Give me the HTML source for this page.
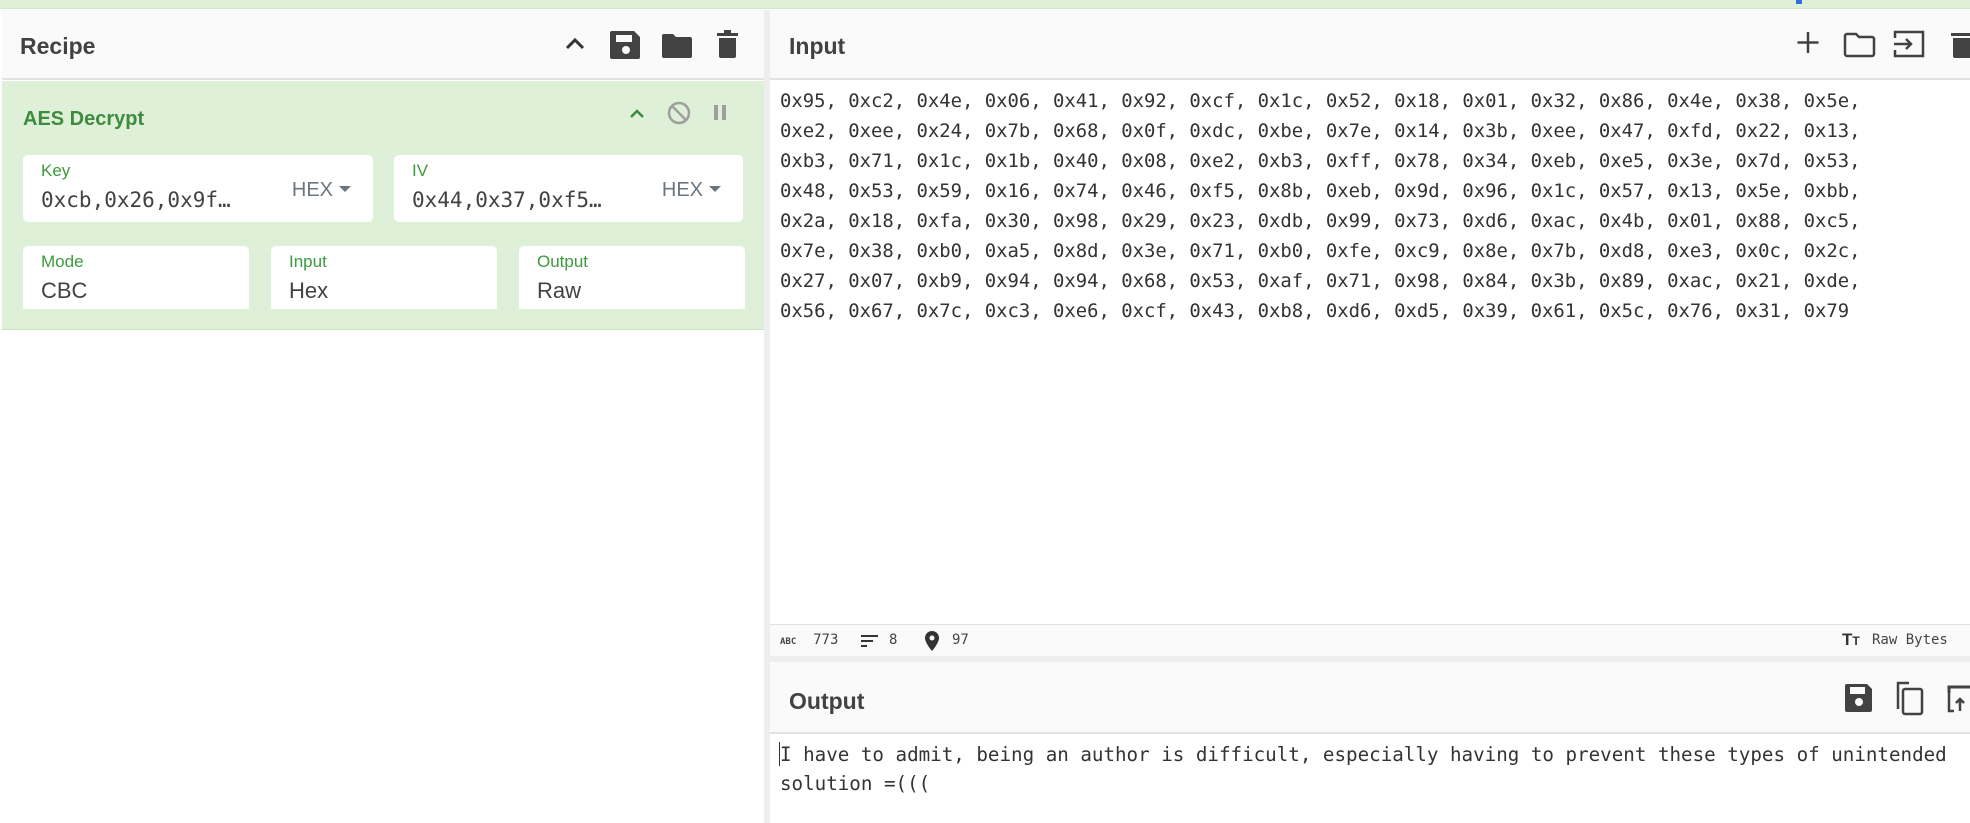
<!DOCTYPE html>
<html><head><meta charset="utf-8"><style>
*{box-sizing:border-box;margin:0;padding:0}
body{width:1970px;height:823px;overflow:hidden;background:#fff;font-family:"Liberation Sans","DejaVu Sans",sans-serif;position:relative}
.abs{position:absolute}
.top{left:0;top:0;width:1970px;height:9px;background:#dff0d8;border-bottom:1px solid #d4e6cc}
.hdr{background:#fafafa;border-bottom:2px solid #e3e3e3}
.title{font-size:23px;font-weight:bold;color:#424242}
.box{background:#fff;border-radius:5px}
.lbl{font-size:17px;color:#3d9a3d;position:absolute;left:18px;top:6px}
.val{font-size:22px;color:#424242;position:absolute;left:18px;top:32px}
.mono{font-family:"DejaVu Sans Mono","Liberation Mono",monospace}
.hex{position:absolute;right:22px;top:24px;font-size:20px;color:#6c757d}
.hex:after{content:"";display:inline-block;margin-left:6px;vertical-align:4px;border-left:6px solid transparent;border-right:6px solid transparent;border-top:6px solid #6c757d}
pre{font-family:"DejaVu Sans Mono","Liberation Mono",monospace;font-size:18.9px;line-height:30px;color:#333}
.st{font-family:"DejaVu Sans Mono",monospace;font-size:14px;color:#444}
</style></head><body>
<div class="abs top"></div>
<div class="abs" style="left:1796px;top:0;width:6px;height:4px;background:#2f6fe0"></div>

<div class="abs hdr" style="left:2px;top:10px;width:762px;height:70px"></div>
<div class="abs title" style="left:20px;top:33px">Recipe</div>
<svg class="abs" style="left:560px;top:28px" width="190" height="34" viewBox="0 0 190 34">
<path d="M7 20 L15 12 L23 20" fill="none" stroke="#333" stroke-width="3"/>
<path d="M52 3 h22 l6 6 v20 a2 2 0 0 1-2 2 h-26 a2 2 0 0 1-2-2 v-24 a2 2 0 0 1 2-2z" fill="#424242"/>
<rect x="56" y="7" width="16" height="7" fill="#fafafa"/><circle cx="66" cy="22" r="4" fill="#fafafa"/>
<path d="M102 6 h11 l3 3 h14 a2 2 0 0 1 2 2 v17 a2 2 0 0 1-2 2 h-26 a2 2 0 0 1-2-2 v-20 a2 2 0 0 1 2-2z" fill="#424242"/>
<rect x="157" y="5" width="21" height="3" fill="#424242"/><rect x="164" y="2" width="7" height="3" fill="#424242"/>
<path d="M159 10 h17 v18 a2 2 0 0 1-2 2 h-13 a2 2 0 0 1-2-2z" fill="#424242"/>
</svg>
<div class="abs" style="left:2px;top:81px;width:762px;height:249px;background:#dff0d8;border-bottom:1px solid #c9e2bf"></div>
<div class="abs" style="left:23px;top:108px;font-size:20px;font-weight:bold;color:#3d8b3d">AES Decrypt</div>
<svg class="abs" style="left:625px;top:100px" width="110" height="28" viewBox="0 0 110 28">
<path d="M6 17 L12 11 L18 17" fill="none" stroke="#3d8b3d" stroke-width="2.5"/>
<circle cx="54" cy="13" r="10" fill="none" stroke="#9e9e9e" stroke-width="2.5"/>
<path d="M47 6 L61 20" stroke="#9e9e9e" stroke-width="2.5"/>
<rect x="89" y="5" width="4" height="15" fill="#9e9e9e"/><rect x="97" y="5" width="4" height="15" fill="#9e9e9e"/>
</svg>
<div class="abs box" style="left:23px;top:155px;width:350px;height:67px"><div class="lbl">Key</div><div class="val mono" style="font-size:21px;top:33px">0xcb,0x26,0x9f…</div><div class="hex">HEX</div></div>
<div class="abs box" style="left:394px;top:155px;width:349px;height:67px"><div class="lbl">IV</div><div class="val mono" style="font-size:21px;top:33px">0x44,0x37,0xf5…</div><div class="hex">HEX</div></div>
<div class="abs box" style="left:23px;top:246px;width:226px;height:63px;border-radius:5px 5px 0 0"><div class="lbl">Mode</div><div class="val">CBC</div></div>
<div class="abs box" style="left:271px;top:246px;width:226px;height:63px;border-radius:5px 5px 0 0"><div class="lbl">Input</div><div class="val">Hex</div></div>
<div class="abs box" style="left:519px;top:246px;width:226px;height:63px;border-radius:5px 5px 0 0"><div class="lbl">Output</div><div class="val">Raw</div></div>

<div class="abs" style="left:764px;top:10px;width:6px;height:813px;background:#eeeeee"></div>

<div class="abs hdr" style="left:770px;top:10px;width:1200px;height:70px"></div>
<div class="abs title" style="left:789px;top:33px">Input</div>
<svg class="abs" style="left:1790px;top:28px" width="180" height="34" viewBox="0 0 180 34">
<path d="M18 4 v21 M7.5 14.5 h21" stroke="#424242" stroke-width="2.5"/>
<path d="M57 6 h9 l3 3 h13 a2 2 0 0 1 2 2 v15 a2 2 0 0 1-2 2 h-25 a2 2 0 0 1-2-2 v-18 a2 2 0 0 1 2-2z" fill="none" stroke="#424242" stroke-width="2.5"/>
<path d="M105 10 v-6 h28 v24 h-28 v-6" fill="none" stroke="#424242" stroke-width="2.5"/>
<path d="M104 16 h17 M116 11 l5 5 -5 5" fill="none" stroke="#424242" stroke-width="2.5"/>
<rect x="161" y="5" width="22" height="3" fill="#424242"/><path d="M163 10 h18 v18 a2 2 0 0 1-2 2 h-14 a2 2 0 0 1-2-2z" fill="#424242"/>
</svg>
<pre class="abs" style="left:780px;top:86px">0x95, 0xc2, 0x4e, 0x06, 0x41, 0x92, 0xcf, 0x1c, 0x52, 0x18, 0x01, 0x32, 0x86, 0x4e, 0x38, 0x5e,
0xe2, 0xee, 0x24, 0x7b, 0x68, 0x0f, 0xdc, 0xbe, 0x7e, 0x14, 0x3b, 0xee, 0x47, 0xfd, 0x22, 0x13,
0xb3, 0x71, 0x1c, 0x1b, 0x40, 0x08, 0xe2, 0xb3, 0xff, 0x78, 0x34, 0xeb, 0xe5, 0x3e, 0x7d, 0x53,
0x48, 0x53, 0x59, 0x16, 0x74, 0x46, 0xf5, 0x8b, 0xeb, 0x9d, 0x96, 0x1c, 0x57, 0x13, 0x5e, 0xbb,
0x2a, 0x18, 0xfa, 0x30, 0x98, 0x29, 0x23, 0xdb, 0x99, 0x73, 0xd6, 0xac, 0x4b, 0x01, 0x88, 0xc5,
0x7e, 0x38, 0xb0, 0xa5, 0x8d, 0x3e, 0x71, 0xb0, 0xfe, 0xc9, 0x8e, 0x7b, 0xd8, 0xe3, 0x0c, 0x2c,
0x27, 0x07, 0xb9, 0x94, 0x94, 0x68, 0x53, 0xaf, 0x71, 0x98, 0x84, 0x3b, 0x89, 0xac, 0x21, 0xde,
0x56, 0x67, 0x7c, 0xc3, 0xe6, 0xcf, 0x43, 0xb8, 0xd6, 0xd5, 0x39, 0x61, 0x5c, 0x76, 0x31, 0x79</pre>

<div class="abs" style="left:770px;top:624px;width:1200px;height:32px;background:#fafafa;border-top:1px solid #e3e3e3"></div>
<div class="abs st" style="left:780px;top:632px"><b style="font-size:9px;letter-spacing:0">ABC</b>&nbsp; 773</div>
<svg class="abs" style="left:860px;top:633px" width="20" height="16"><path d="M1 3h17M1 8h12M1 13h6" stroke="#333" stroke-width="2"/></svg>
<div class="abs st" style="left:889px;top:632px">8</div>
<svg class="abs" style="left:924px;top:630px" width="16" height="22"><path d="M8 1a7 7 0 0 1 7 7c0 5-7 13-7 13s-7-8-7-13a7 7 0 0 1 7-7z" fill="#333"/><circle cx="8" cy="8" r="2.5" fill="#fafafa"/></svg>
<div class="abs st" style="left:952px;top:632px">97</div>
<div class="abs" style="left:1842px;top:630px;font-size:17px;font-weight:bold;color:#333">T<span style="font-size:12px">T</span></div>
<div class="abs st" style="left:1872px;top:632px">Raw Bytes</div>
<div class="abs" style="left:770px;top:656px;width:1200px;height:6px;background:#eeeeee"></div>

<div class="abs hdr" style="left:770px;top:662px;width:1200px;height:72px"></div>
<div class="abs title" style="left:789px;top:688px">Output</div>
<svg class="abs" style="left:1840px;top:680px" width="130" height="38" viewBox="0 0 130 38">
<path d="M7 4 h20 l5 5 v21 a2 2 0 0 1-2 2 h-23 a2 2 0 0 1-2-2 v-24 a2 2 0 0 1 2-2z" fill="#424242"/>
<rect x="10" y="7" width="15" height="7" fill="#fafafa"/><circle cx="19" cy="22" r="4" fill="#fafafa"/>
<path d="M69 3 h-11 v26" fill="none" stroke="#424242" stroke-width="2.5"/>
<rect x="63" y="9" width="19" height="25" rx="2" fill="none" stroke="#424242" stroke-width="2.5"/>
<path d="M109 13 v-6 h21" fill="none" stroke="#424242" stroke-width="3"/>
<path d="M109 12 v19 h5 M120 31 v-12 M116 23 l4-4 4 4" fill="none" stroke="#424242" stroke-width="2.5"/>
</svg>
<div class="abs" style="left:779px;top:742px;width:1px;height:24px;background:#333"></div>
<pre class="abs" style="left:780px;top:740px;font-size:19.2px;line-height:29px">I have to admit, being an author is difficult, especially having to prevent these types of unintended
solution =(((</pre>
</body></html>
